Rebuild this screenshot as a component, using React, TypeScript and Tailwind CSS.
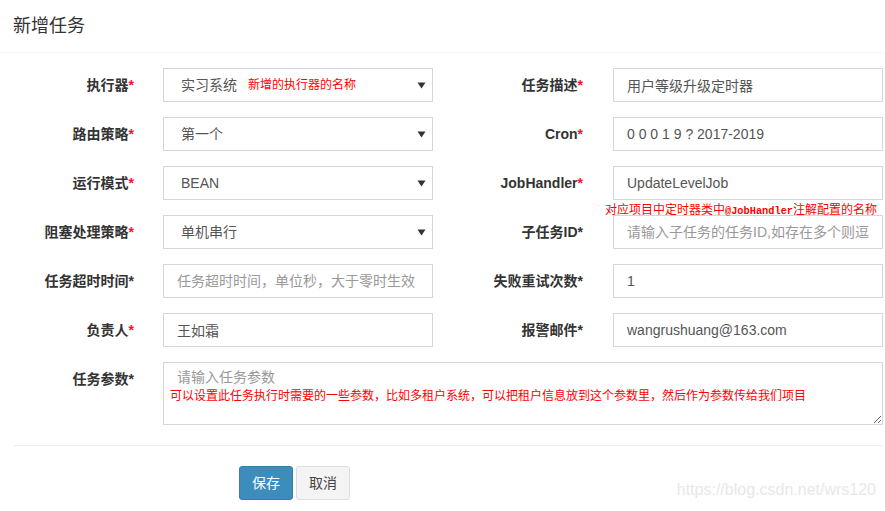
import React from 'react';

const font = "font-['Liberation_Sans','Noto_Sans_CJK_SC',sans-serif]";

function Label({ text, red = false, wide = false }: { text: string; red?: boolean; wide?: boolean }) {
    return (
        <div className={`${wide ? 'w-[150px]' : 'w-[134px]'} shrink-0 text-right text-[14px] font-bold text-[#333]`}>
            {text}
            <span className={red ? 'text-[#f0142d]' : 'text-[#333]'}>*</span>
        </div>
    );
}

function SelectBox({ value, children }: { value: string; children?: React.ReactNode }) {
    return (
        <div className="ml-[29px] flex h-[34px] w-[270px] shrink-0 items-center border border-[#d2d6de] pl-[17px] pr-[6px] text-[14px] text-[#555]">
            <span>{value}</span>
            {children}
            <svg className="ml-auto" width="9" height="7" viewBox="0 0 9 7">
                <path d="M0.5 0.5 H8.5 L4.5 6.5 Z" fill="#333" />
            </svg>
        </div>
    );
}

function TextBox({ value, placeholder, right = false }: { value?: string; placeholder?: string; right?: boolean }) {
    return (
        <input
            readOnly
            value={value ?? ''}
            placeholder={placeholder}
            className={`${right ? 'ml-[30px]' : 'ml-[29px]'} h-[34px] w-[270px] shrink-0 border border-[#d2d6de] px-[13px] text-[14px] text-[#555] outline-none placeholder:text-[#999] ${font}`}
        />
    );
}

export default function App() {
    return (
        <div className={`relative h-[511px] w-[885px] overflow-hidden bg-white ${font}`}>
            {/* header */}
            <div className="border-b border-[#f4f4f4] px-[13px] py-[15px]">
                <h4 className="text-[18px] leading-[22px] text-[#333]">新增任务</h4>
            </div>

            {/* form */}
            <div className="flex flex-col gap-[15px] pt-[15px]">
                <div className="flex items-center">
                    <Label text="执行器" red />
                    <SelectBox value="实习系统">
                        <span className="ml-[11px] text-[12px] text-[#f00]">新增的执行器的名称</span>
                    </SelectBox>
                    <Label text="任务描述" red wide />
                    <TextBox value="用户等级升级定时器" right />
                </div>
                <div className="flex items-center">
                    <Label text="路由策略" red />
                    <SelectBox value="第一个" />
                    <Label text="Cron" red wide />
                    <TextBox value="0 0 0 1 9 ? 2017-2019" right />
                </div>
                <div className="flex items-center">
                    <Label text="运行模式" red />
                    <SelectBox value="BEAN" />
                    <Label text="JobHandler" red wide />
                    <div className="relative">
                        <TextBox value="UpdateLevelJob" right />
                        <div className="absolute left-[22px] top-[36px] whitespace-nowrap text-[12px] leading-[16px] text-[#f00]">
                            对应项目中定时器类中
                            <span className="font-['Liberation_Mono',monospace] text-[10.3px] font-bold">@JobHandler</span>
                            注解配置的名称
                        </div>
                    </div>
                </div>
                <div className="flex items-center">
                    <Label text="阻塞处理策略" red />
                    <SelectBox value="单机串行" />
                    <Label text="子任务ID" wide />
                    <TextBox placeholder="请输入子任务的任务ID,如存在多个则逗号分隔" right />
                </div>
                <div className="flex items-center">
                    <Label text="任务超时时间" />
                    <TextBox placeholder="任务超时时间，单位秒，大于零时生效" />
                    <Label text="失败重试次数" wide />
                    <TextBox value="1" right />
                </div>
                <div className="flex items-center">
                    <Label text="负责人" red />
                    <TextBox value="王如霜" />
                    <Label text="报警邮件" wide />
                    <TextBox value="wangrushuang@163.com" right />
                </div>
                <div className="flex items-start">
                    <div className="pt-[7px]">
                        <Label text="任务参数" />
                    </div>
                    <div className="relative ml-[29px]">
                        <textarea
                            readOnly
                            placeholder="请输入任务参数"
                            className={`block h-[63px] w-[720px] border border-[#d2d6de] px-[13px] pt-[4px] text-[14px] leading-[20px] text-[#555] outline-none placeholder:text-[#999] ${font}`}
                        />
                        <div className="pointer-events-none absolute left-[7px] top-[26px] whitespace-nowrap text-[12px] leading-[16px] text-[#f00]">
                            可以设置此任务执行时需要的一些参数，比如多租户系统，可以把租户信息放到这个参数里，然后作为参数传给我们项目
                        </div>
                    </div>
                </div>
            </div>

            {/* footer */}
            <div className="ml-[14px] mr-[2px] mt-[20px] border-t border-[#eee]" />
            <div className="flex gap-[3px] pl-[239px] pt-[20px]">
                <button className="h-[34px] rounded-[3px] border border-[#367fa9] bg-[#3c8dbc] px-[12px] text-[14px] text-white">
                    保存
                </button>
                <button className="h-[34px] rounded-[3px] border border-[#ddd] bg-[#f4f4f4] px-[12px] text-[14px] text-[#444]">
                    取消
                </button>
            </div>

            <div className="absolute bottom-[9px] right-[9px] text-[16px] text-[#e8e8e8]">https://blog.csdn.net/wrs120</div>
        </div>
    );
}
